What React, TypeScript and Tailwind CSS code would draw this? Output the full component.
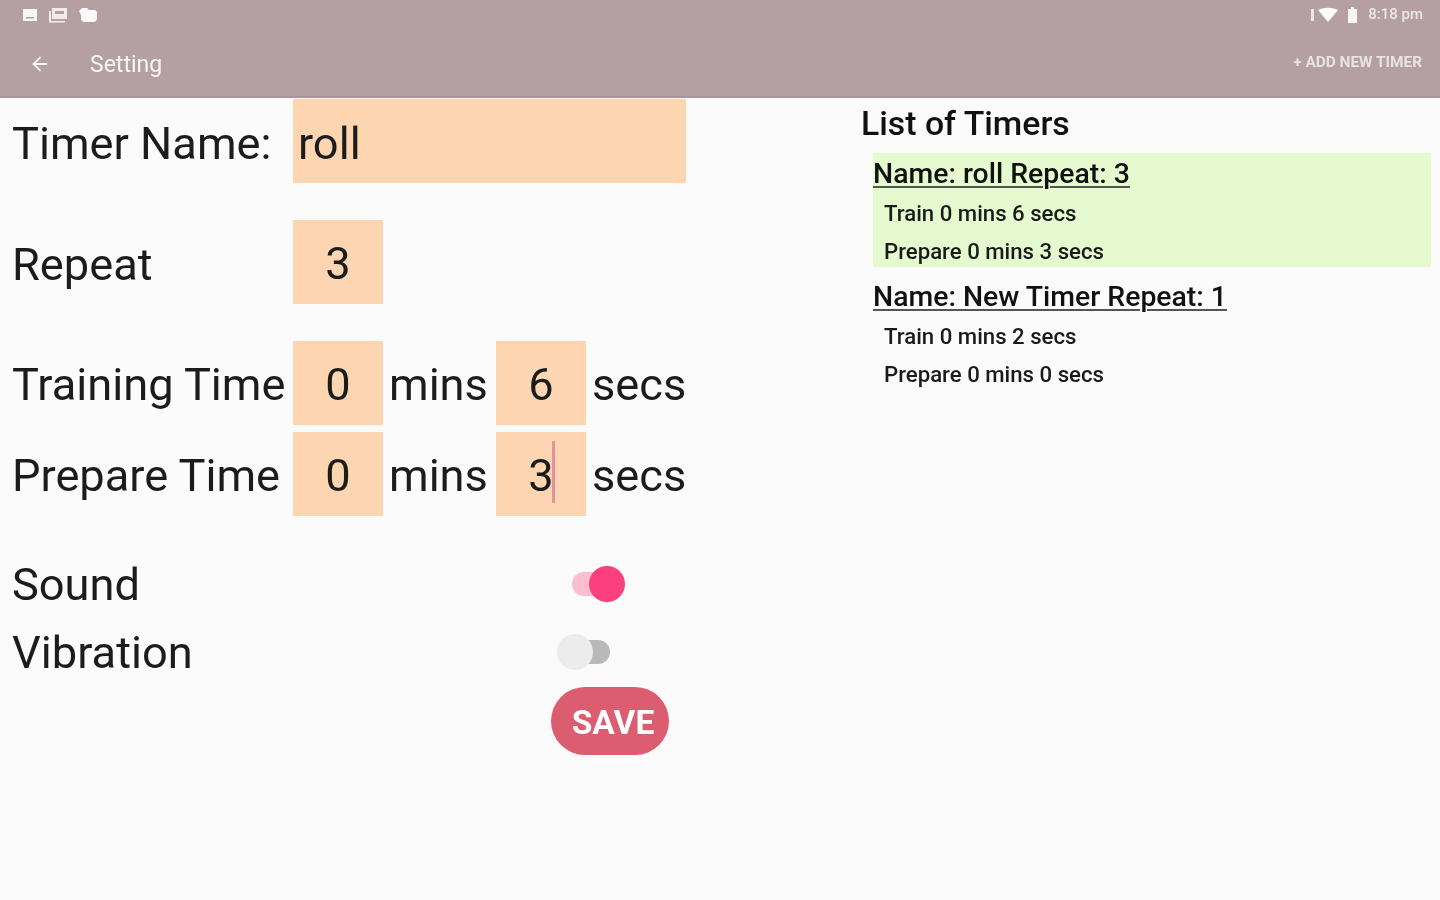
import { ArrowLeft } from "lucide-react";

function StatusIcons() {
  return (
    <div className="flex items-center gap-[8px]">
      <svg width="16" height="16" viewBox="0 0 16 16" className="text-white/90">
        <path d="M1 2h14v12H1z" fill="currentColor" />
        <path d="M4 10h8v1.5H4z" fill="#b4a0a2" />
      </svg>
      <svg width="20" height="16" viewBox="0 0 20 16" className="ml-[2px] text-white/80">
        <path d="M4 1h15v11H4z" fill="currentColor" />
        <path d="M1 4h2v10h14v1.5H1z" fill="currentColor" />
        <path d="M7 4h9v3H7z" fill="#b4a0a2" />
      </svg>
      <svg width="20" height="16" viewBox="0 0 20 16" className="ml-[2px] text-white/95">
        <path d="M1 4l3-3h5l2 2h5a3 3 0 0 1 3 3v5a4 4 0 0 1-4 4H7a4 4 0 0 1-4-4V8z" fill="currentColor" />
      </svg>
    </div>
  );
}

function Field({ value, caret = false }: { value: string; caret?: boolean }) {
  return (
    <div className="flex h-[84px] w-[90px] shrink-0 items-center justify-center bg-[#fdd5b0] pt-[4px]">
      <span className="relative">
        {value}
        {caret ? <span className="absolute left-[24px] top-[-9px] h-[62px] w-[3px] bg-[#e58fa0]" /> : null}
      </span>
    </div>
  );
}

function TimeRow({ label, mins, secs, caret, className }: { label: string; mins: string; secs: string; caret?: boolean; className: string }) {
  return (
    <div className={`flex items-center ${className}`}>
      <span className="w-[281px] shrink-0 pt-[4px]">{label}</span>
      <Field value={mins} />
      <span className="w-[113px] shrink-0 pl-[6px] pt-[4px]">mins</span>
      <Field value={secs} caret={caret} />
      <span className="pl-[6px] pt-[4px]">secs</span>
    </div>
  );
}

function TimerItem({ title, train, prepare, active = false, className = "" }: { title: string; train: string; prepare: string; active?: boolean; className?: string }) {
  return (
    <div className={`h-[114px] w-[558px] ${active ? "bg-[#e5fbcf]" : ""} ${className}`}>
      <p className="pt-[2px] text-[28.4px] leading-[38px] font-medium text-[#111] underline decoration-[2px] underline-offset-[3px] decoration-[#555]">{title}</p>
      <p className="mt-[1px] pl-[11px] text-[22.2px] leading-[38px] font-medium text-[#1a1a1a]">{train}</p>
      <p className="pl-[11px] text-[22.2px] leading-[38px] font-medium text-[#1a1a1a]">{prepare}</p>
    </div>
  );
}

export default function App() {
  return (
    <div className="flex h-[900px] w-[1440px] flex-col overflow-hidden bg-[#fbfbfb] font-['Roboto',sans-serif] blur-[0.7px]">
      <header className="h-[98px] shrink-0 border-b-2 border-[#a89497] bg-[#b4a0a2] pl-[22px] pr-[17px] text-white">
        <div className="flex h-[29px] items-center justify-between">
          <StatusIcons />
          <div className="flex items-center text-[15px] font-medium text-white/75">
            <svg width="8" height="16" viewBox="0 0 8 16" className="mr-[1px]">
              <path d="M2 2h3v12H2z" fill="currentColor" />
            </svg>
            <svg width="20" height="16" viewBox="0 0 20 16" className="text-white">
              <path d="M0 3c6-3 14-3 20 0l-10 12z" fill="currentColor" />
            </svg>
            <svg width="12" height="16" viewBox="0 0 12 16" className="ml-[9px] text-white/90">
              <path d="M4 0h3v2h3v14H1V2h3z" fill="currentColor" />
            </svg>
            <span className="ml-[9px] text-[15px]">8:18 pm</span>
          </div>
        </div>
        <div className="flex h-[70px] items-center">
          <ArrowLeft size={22} strokeWidth={2} className="ml-[7px] text-white/90" />
          <span className="ml-[39px] pt-[2px] text-[23px] text-white/90">Setting</span>
          <span className="ml-auto pb-[2px] pr-[1px] text-[15.4px] font-bold text-white/70">+ ADD NEW TIMER</span>
        </div>
      </header>

      <main className="flex flex-1">
        <section className="w-[862px] shrink-0 pl-[12px] text-[45.2px] leading-[52px] text-[#1c1c1c]">
          <div className="mt-[1px] flex items-center">
            <span className="w-[281px] shrink-0 pt-[5px]">Timer Name:</span>
            <div className="flex h-[84px] w-[393px] items-center bg-[#fdd5b0] pl-[5px] pt-[5px]">roll</div>
          </div>
          <div className="mt-[37px] flex items-center">
            <span className="w-[281px] shrink-0 pt-[5px]">Repeat</span>
            <Field value="3" />
          </div>
          <TimeRow label="Training Time" mins="0" secs="6" className="mt-[37px]" />
          <TimeRow label="Prepare Time" mins="0" secs="3" caret className="mt-[7px]" />
          <div className="mt-[42px] flex h-[52px] items-center">
            <span className="w-[560px] shrink-0 pt-[2px]">Sound</span>
            <div className="relative h-[36px] w-[53px]">
              <span className="absolute left-0 top-[6px] h-[24px] w-[40px] rounded-full bg-[#fbbdd0]" />
              <span className="absolute right-0 top-0 h-[36px] w-[36px] rounded-full bg-[#fb3f7f]" />
            </div>
          </div>
          <div className="mt-[16px] flex h-[52px] items-center">
            <span className="w-[545px] shrink-0 pt-[2px]">Vibration</span>
            <div className="relative h-[36px] w-[53px]">
              <span className="absolute right-0 top-[6px] h-[24px] w-[40px] rounded-full bg-[#b9b9b9]" />
              <span className="absolute left-0 top-0 h-[36px] w-[36px] rounded-full bg-[#ececec]" />
            </div>
          </div>
          <button type="button" className="ml-[539px] mt-[9px] flex h-[68px] w-[118px] items-center justify-center rounded-[34px] bg-[#dc5c70] pl-[6px] pt-[3px] text-[33.5px] font-bold text-white">
            SAVE
          </button>
        </section>

        <section className="flex-1 pt-[6px]">
          <h2 className="-ml-[1px] h-[49px] text-[33.8px] leading-[40px] font-medium text-[#111]">List of Timers</h2>
          <div className="pl-[11px]">
            <TimerItem title="Name: roll Repeat: 3" train="Train 0 mins 6 secs" prepare="Prepare 0 mins 3 secs" active />
            <TimerItem title="Name: New Timer Repeat: 1" train="Train 0 mins 2 secs" prepare="Prepare 0 mins 0 secs" className="mt-[9px]" />
          </div>
        </section>
      </main>
    </div>
  );
}
